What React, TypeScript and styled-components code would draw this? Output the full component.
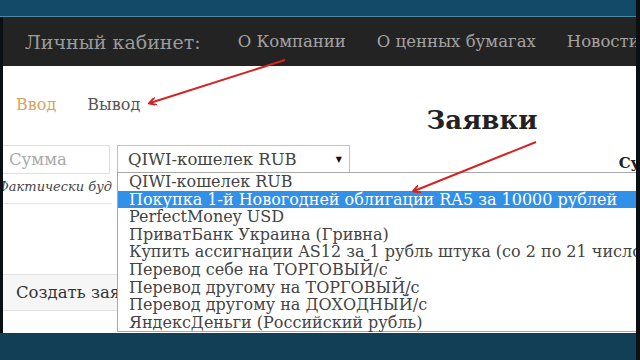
import React from "react";
import styled, { createGlobalStyle } from "styled-components";

const Global = createGlobalStyle`
  html, body { margin: 0; padding: 0; background: #0b0f12; }
  * { box-sizing: border-box; }
`;

const serif = `"DejaVu Serif", "Liberation Serif", serif`;

const Screen = styled.div`
  width: 640px;
  height: 360px;
  display: flex;
  flex-direction: column;
  background: #0b0f12;
  padding-right: 4px;
  overflow: hidden;
  position: relative;
  font-family: ${serif};
`;

const TopBand = styled.div`
  height: 17px;
  flex: none;
  background: #134a68;
  border-bottom: 1px solid #4a8aa4;
`;

const Page = styled.div`
  flex: 1;
  margin-left: 3px;
  display: flex;
  flex-direction: column;
  background: #fff;
  overflow: hidden;
  position: relative;
`;

const NavBar = styled.nav`
  height: 49px;
  flex: none;
  background: #232323;
  display: flex;
  align-items: center;
  padding-left: 22px;
  white-space: nowrap;
`;

const Brand = styled.span`
  font-size: 19px;
  color: #9b9b9b;
  margin-right: 37px;
`;

const NavLink = styled.span`
  font-size: 16.5px;
  color: #a3a3a3;
  margin-right: 31px;
`;

const Content = styled.div`
  flex: 1;
  display: grid;
  grid-template-columns: 352px 1fr;
  position: relative;
`;

const LeftCol = styled.div`
  display: flex;
  flex-direction: column;
`;

const Tabs = styled.div`
  display: flex;
  margin-top: 22px;
  height: 32px;
  align-items: center;
`;

const Tab = styled.span<{ $active?: boolean }>`
  font-size: 16px;
  padding: 0 14px 0 13px;
  margin-right: 4px;
  color: ${(p) => (p.$active ? "#e0a060" : "#555")};
`;

const FormRow = styled.div`
  display: flex;
  gap: 7px;
  margin-top: 25px;
  height: 29px;
`;

const AmountInput = styled.div`
  width: 110px;
  margin-left: -3px;
  border: 1px solid #e0e0e0;
  display: flex;
  align-items: center;
  padding-left: 8px;
  font-size: 16.5px;
  color: #aaa;
`;

const Select = styled.div`
  width: 233px;
  border: 1px solid #b6c2d6;
  display: flex;
  align-items: center;
  justify-content: space-between;
  padding: 0 7px 0 10px;
  font-size: 16.5px;
  color: #444;
`;

const Caret = styled.span`
  font-size: 8px;
  color: #111;
`;

const Hint = styled.div`
  width: 114px;
  font-size: 13px;
  font-style: italic;
  color: #444;
  margin-top: 2px;
  margin-left: -5px;
  height: 28px;
  line-height: 22px;
  border-bottom: 1px solid #e6e6e6;
  white-space: nowrap;
  overflow: hidden;
`;

const CreateButton = styled.div`
  margin-top: 70px;
  height: 37px;
  border-top: 1px solid #e2e2e2;
  border-bottom: 1px solid #e2e2e2;
  background: #f6f6f6;
  display: flex;
  align-items: center;
  padding-left: 13px;
  font-size: 16.5px;
  color: #333;
  white-space: nowrap;
`;

const RightCol = styled.div`
  display: flex;
  flex-direction: column;
`;

const Heading = styled.h2`
  margin: 39px 0 0 0;
  padding-right: 27px;
  text-align: center;
  font-size: 26px;
  font-weight: bold;
  color: #222;
  line-height: 30px;
`;

const TableHead = styled.div`
  margin-top: 11px;
  margin-left: -5px;
  height: 27px;
  border-bottom: 1px solid #d8d8d8;
  display: flex;
  justify-content: flex-end;
  align-items: flex-end;
  white-space: nowrap;
`;

const HeadCell = styled.span`
  font-size: 15px;
  line-height: 15px;
  font-weight: bold;
  color: #222;
  margin-right: -40px;
  margin-bottom: 1px;
`;

const DropList = styled.ul`
  position: absolute;
  left: 114px;
  top: 106px;
  width: 522px;
  height: 160px;
  margin: 0;
  padding: 0;
  list-style: none;
  background: #fff;
  border: 1px solid #a9a9a9;
  z-index: 2;
`;

const Option = styled.li<{ $selected?: boolean }>`
  height: 17.6px;
  line-height: 17.6px;
  padding-left: 11px;
  font-size: 16px;
  white-space: nowrap;
  color: ${(p) => (p.$selected ? "#fff" : "#444")};
  background: ${(p) => (p.$selected ? "#3190e8" : "transparent")};
`;

const BottomBand = styled.div`
  height: 27px;
  flex: none;
  background: #133f56;
`;

const Arrows = styled.svg`
  position: absolute;
  left: 0;
  top: 0;
  width: 640px;
  height: 360px;
  pointer-events: none;
  z-index: 5;
`;

const options = [
  "QIWI-кошелек RUB",
  "Покупка 1-й Новогодней облигации RA5 за 10000 рублей",
  "PerfectMoney USD",
  "ПриватБанк Украина (Гривна)",
  "Купить ассигнации AS12 за 1 рубль штука (со 2 по 21 число)",
  "Перевод себе на ТОРГОВЫЙ/с",
  "Перевод другому на ТОРГОВЫЙ/с",
  "Перевод другому на ДОХОДНЫЙ/с",
  "ЯндексДеньги (Российский рубль)",
];

export default function App() {
  return (
    <>
      <Global />
      <Screen>
        <TopBand />
        <Page>
          <NavBar>
            <Brand>Личный кабинет:</Brand>
            <NavLink>О Компании</NavLink>
            <NavLink>О ценных бумагах</NavLink>
            <NavLink>Новости</NavLink>
          </NavBar>
          <Content>
            <LeftCol>
              <Tabs>
                <Tab $active>Ввод</Tab>
                <Tab>Вывод</Tab>
              </Tabs>
              <FormRow>
                <AmountInput>Сумма</AmountInput>
                <Select>
                  <span>QIWI-кошелек RUB</span>
                  <Caret>▼</Caret>
                </Select>
              </FormRow>
              <Hint>Фактически будет списано</Hint>
              <CreateButton>Создать заявку</CreateButton>
            </LeftCol>
            <RightCol>
              <Heading>Заявки</Heading>
              <TableHead>
                <HeadCell>Сумма</HeadCell>
              </TableHead>
            </RightCol>
            <DropList>
              {options.map((o, i) => (
                <Option key={o} $selected={i === 1}>
                  {o}
                </Option>
              ))}
            </DropList>
          </Content>
        </Page>
        <BottomBand />
        <Arrows viewBox="0 0 640 360">
          <defs>
            <marker id="ah" markerWidth="8" markerHeight="8" refX="6" refY="4" orient="auto" markerUnits="userSpaceOnUse">
              <path d="M0,0 L7,4 L0,8" fill="none" stroke="#d42323" strokeWidth="2" />
            </marker>
          </defs>
          <line x1="285" y1="60" x2="150" y2="103" stroke="#d42323" strokeWidth="2" markerEnd="url(#ah)" />
          <line x1="536" y1="142" x2="414" y2="191" stroke="#d42323" strokeWidth="2" markerEnd="url(#ah)" />
        </Arrows>
      </Screen>
    </>
  );
}
